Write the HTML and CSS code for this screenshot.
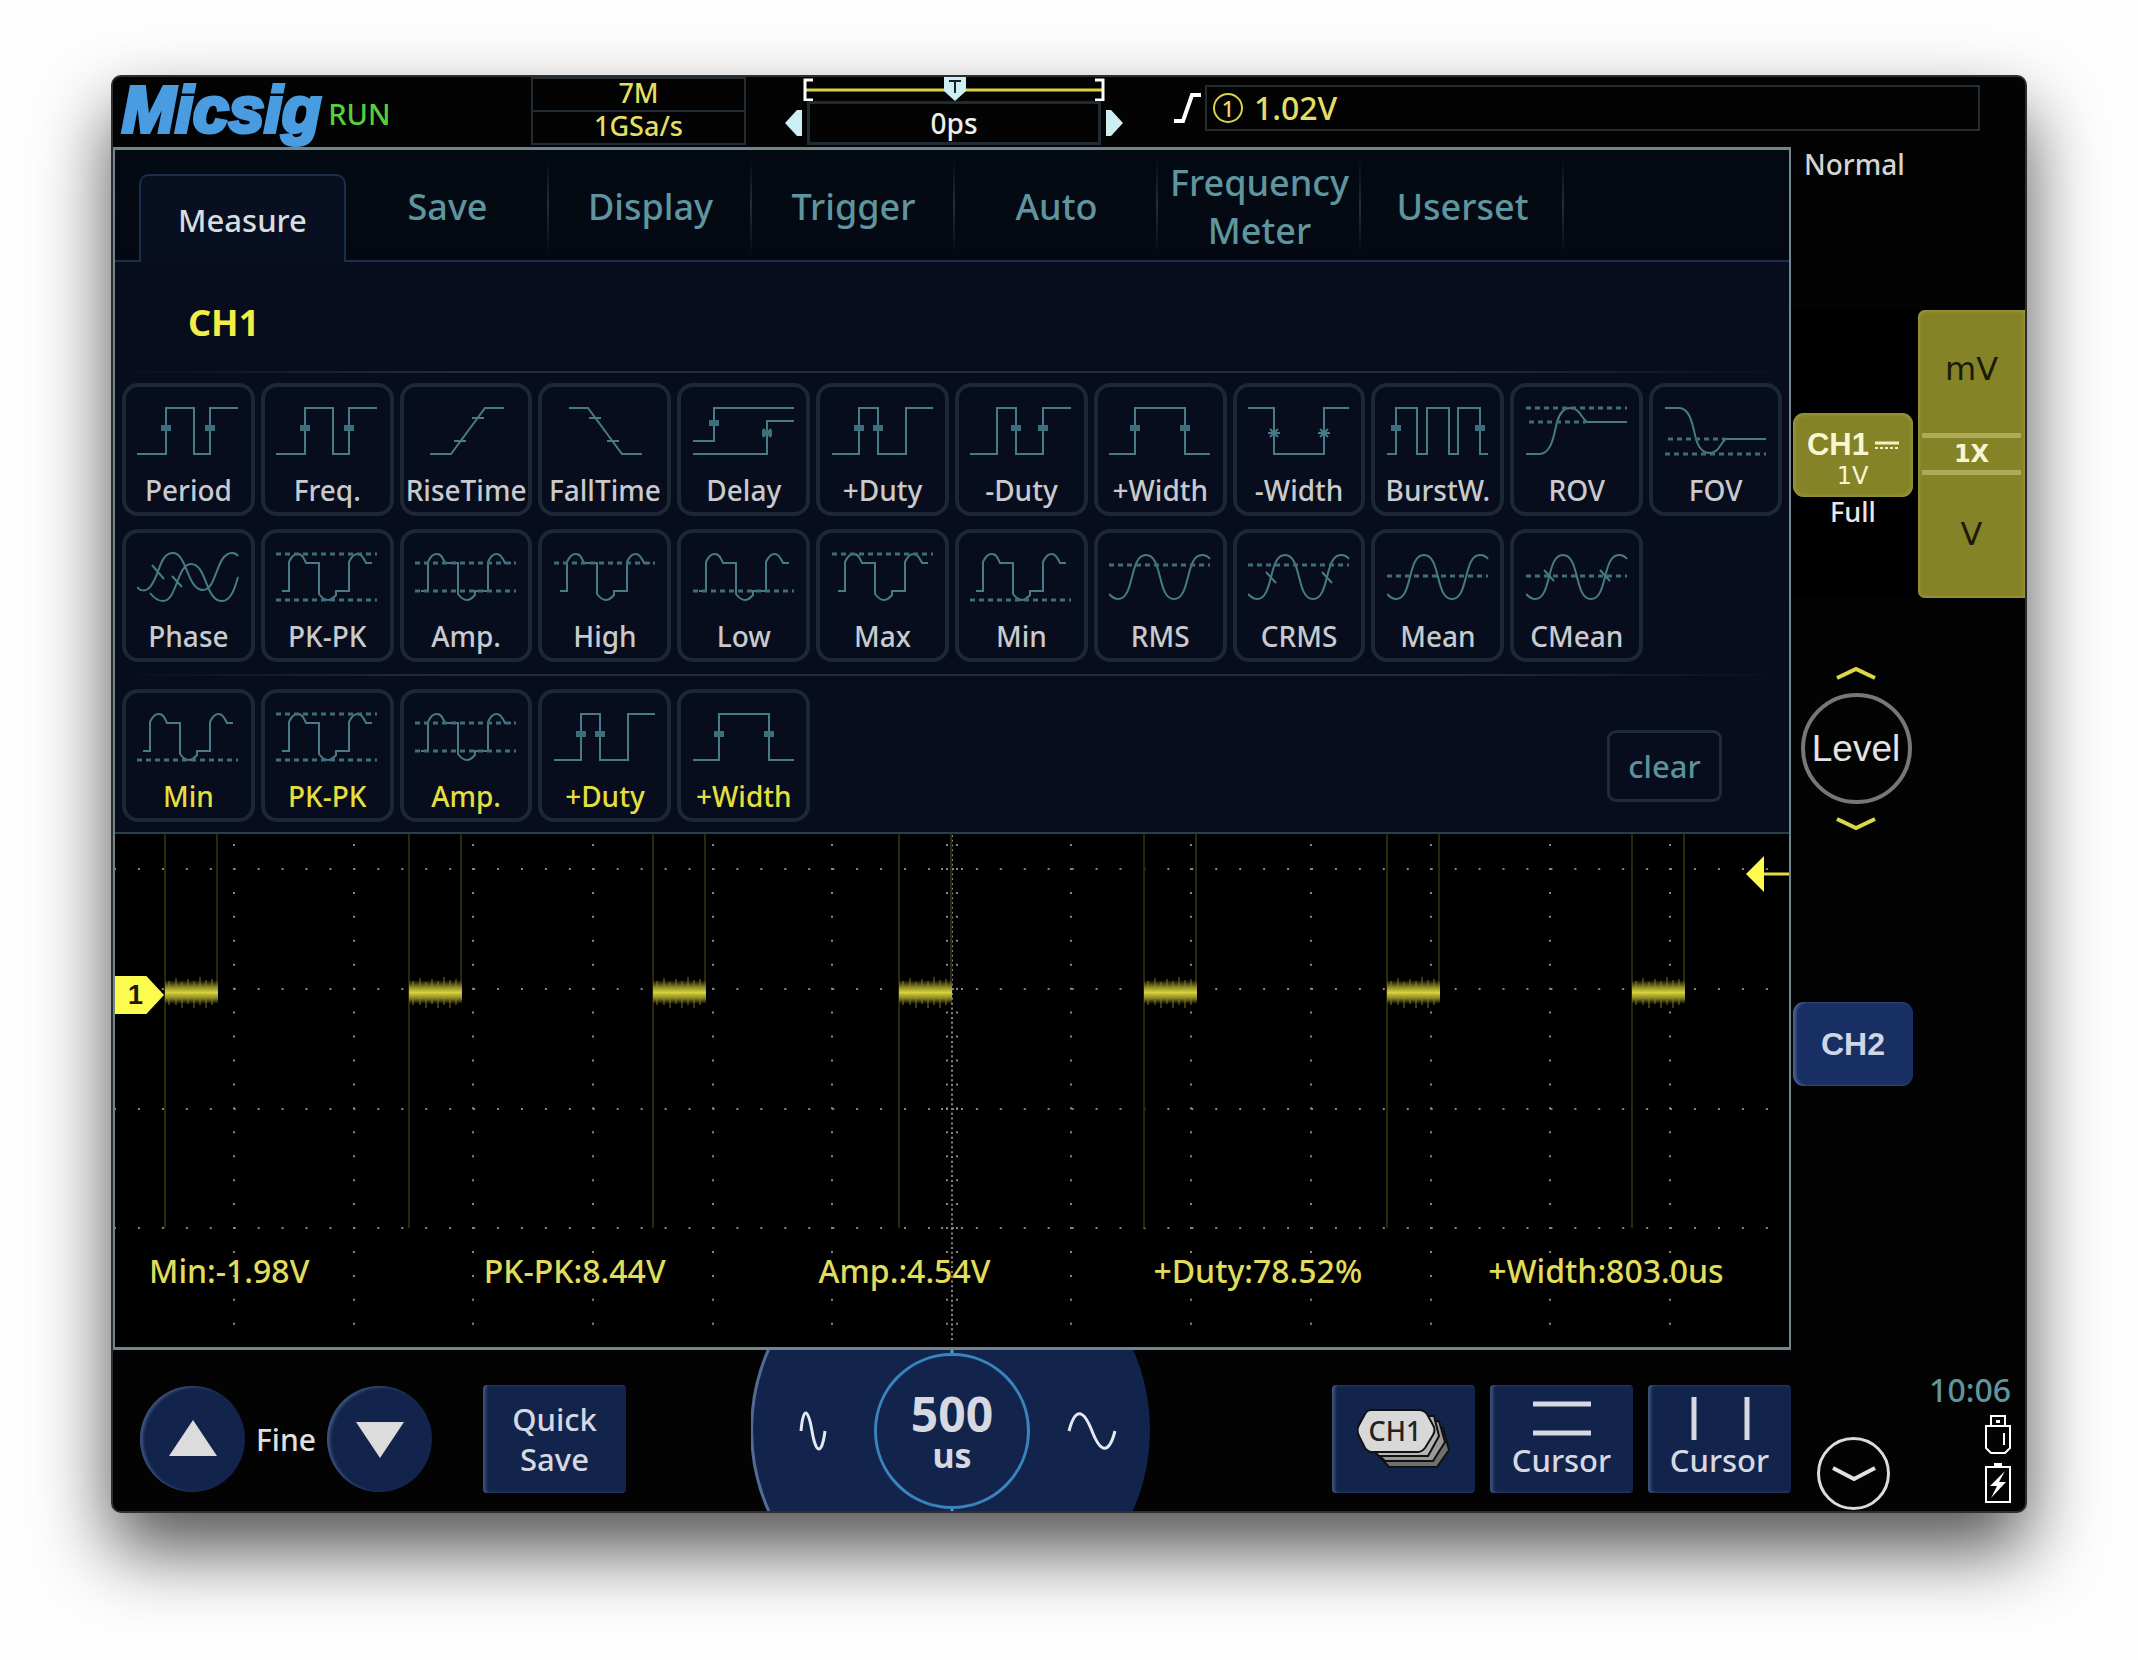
FILE: index.html
```html
<!DOCTYPE html>
<html lang="en">
<head>
<meta charset="utf-8">
<title>Micsig oscilloscope</title>
<link rel="stylesheet" href="styles.css">
</head>
<body>
<svg class="sprite" aria-hidden="true">
  <symbol id="i-period" viewBox="0 0 102 54"><path d="M0 50H29V4H57V50H73V4H101"/><path class="tick" d="M24 24h10M68 24h10"/></symbol>
  <symbol id="i-rise" viewBox="0 0 102 54"><path d="M15 50H36L70 4H89M57 14h12M39 37h12"/></symbol>
  <symbol id="i-fall" viewBox="0 0 102 54"><path d="M15 4H34L68 50H88M35 14h12M53 37h12"/></symbol>
  <symbol id="i-delay" viewBox="0 0 102 54"><path d="M0 37H21V4H101M0 50H74V17H101M70 25l8 8M78 25l-8 8"/><path class="tick" d="M16 19h10M69 29h10"/></symbol>
  <symbol id="i-pduty" viewBox="0 0 102 54"><path d="M0 50H27V4H46V50H74V4H101"/><path class="tick" d="M22 24h10M41 24h10"/></symbol>
  <symbol id="i-nduty" viewBox="0 0 102 54"><path d="M0 50H27V4H46V50H73V4H101"/><path class="tick" d="M41 24h10M68 24h10"/></symbol>
  <symbol id="i-pwidth" viewBox="0 0 102 54"><path d="M0 50H26V4H76V50H101"/><path class="tick" d="M21 24h10M71 24h10"/></symbol>
  <symbol id="i-nwidth" viewBox="0 0 102 54"><path d="M0 4H26V50H76V4H101M22 25l8 8M30 25l-8 8M72 25l8 8M80 25l-8 8M20 29h12M70 29h12"/></symbol>
  <symbol id="i-burst" viewBox="0 0 102 54"><path d="M0 50H9V4H30V50H40V4H62V50H71V4H93V50H101"/><path class="tick" d="M4 24h10M88 24h10"/></symbol>
  <symbol id="i-rov" viewBox="0 0 102 54"><path d="M0 50H13C26 50 28 30 31 18C34 8 38 4 44 4C54 4 55 14 61 18H101"/><path class="dash" d="M0 4H101M3 18H60"/></symbol>
  <symbol id="i-fov" viewBox="0 0 102 54"><path d="M0 4H14C26 4 28 24 31 35C34 45 38 49 45 49C54 49 55 39 61 35H101"/><path class="dash" d="M3 35H60M0 50H101"/></symbol>
  <symbol id="i-phase" viewBox="0 0 102 54"><path d="M0 37C3 41 9 42 13 37C23 26 22 3 36 3C50 3 50 40 66 40C80 40 79 3 95 3Q99 3 101 6M13 43C17 48 21 51 26 51C40 51 40 14 54 14C70 14 68 51 85 51C94 51 98 38 101 27M15 15l12 14M35 26l10 11"/></symbol>
  <symbol id="i-wave" viewBox="0 0 102 54"><path d="M6 41H13V12C16 6 18 4 22 4C27 4 28 9 30 13H43V44C46 48 48 50 52 50C56 50 58 47 60 45V41H73V12C76 6 78 4 82 4C86 4 88 9 90 13H96"/></symbol>
  <symbol id="i-pkpk" viewBox="0 0 102 54"><use href="#i-wave" width="102" height="54"/><path class="dash" d="M0 4H101M0 50H101"/></symbol>
  <symbol id="i-amp" viewBox="0 0 102 54"><use href="#i-wave" width="102" height="54"/><path class="dash" d="M0 13H101M0 41H101"/></symbol>
  <symbol id="i-high" viewBox="0 0 102 54"><use href="#i-wave" width="102" height="54"/><path class="dash" d="M0 13H101"/></symbol>
  <symbol id="i-low" viewBox="0 0 102 54"><use href="#i-wave" width="102" height="54"/><path class="dash" d="M0 41H101"/></symbol>
  <symbol id="i-max" viewBox="0 0 102 54"><use href="#i-wave" width="102" height="54"/><path class="dash" d="M0 4H101"/></symbol>
  <symbol id="i-min" viewBox="0 0 102 54"><use href="#i-wave" width="102" height="54"/><path class="dash" d="M0 50H101"/></symbol>
  <symbol id="i-sine" viewBox="0 0 102 54"><path d="M0 44C3 47 6 49 9 49C26 49 20 5 37 5C54 5 48 49 65 49C82 49 76 5 93 5Q98 5 101 9"/></symbol>
  <symbol id="i-rms" viewBox="0 0 102 54"><use href="#i-sine" width="102" height="54"/><path class="dash" d="M0 15H101"/></symbol>
  <symbol id="i-crms" viewBox="0 0 102 54"><use href="#i-sine" width="102" height="54"/><path class="dash" d="M0 15H101"/><path d="M18 22l10 11M74 22l10 11"/></symbol>
  <symbol id="i-mean" viewBox="0 0 102 54"><use href="#i-sine" width="102" height="54"/><path class="dash" d="M0 26H101"/></symbol>
  <symbol id="i-cmean" viewBox="0 0 102 54"><use href="#i-sine" width="102" height="54"/><path class="dash" d="M0 26H101"/><path d="M18 20l10 11M74 20l10 11"/></symbol>
</svg>

<main class="device">
  <header class="topbar">
    <div class="brand"><span class="logo">Micsig</span><span class="run">RUN</span></div>
    <div class="memory"><span>7M</span><span>1GSa/s</span></div>
    <div class="timebase">
      <svg class="overview" viewBox="0 0 302 24" preserveAspectRatio="none" aria-hidden="true">
        <path d="M2 13H300" stroke="#d9d545" stroke-width="3"/>
        <path d="M10 3H2V23H10M292 3H300V23H292" fill="none" stroke="#fff" stroke-width="3"/>
        <path d="M141 0H163V14L152 24L141 14Z" fill="#cdeef2"/>
        <path d="M146 4H158M152 4V16" stroke="#10242c" stroke-width="2"/>
      </svg>
      <div class="offset">
        <button class="nudge" aria-label="Earlier"><svg width="17" height="28"><path d="M0 14L12 1H17V27H12Z" fill="#cdeef2"/></svg></button>
        <span class="offset-value">0ps</span>
        <button class="nudge" aria-label="Later"><svg width="17" height="28"><path d="M17 14L5 1H0V27H5Z" fill="#cdeef2"/></svg></button>
      </div>
    </div>
    <div class="trigger">
      <svg width="27" height="32" aria-hidden="true"><path d="M0 29H9L18 3H27" fill="none" stroke="#fff" stroke-width="4"/></svg>
      <div class="trigger-value"><span class="source">1</span><span>1.02V</span></div>
    </div>
  </header>

  <section class="screen">
    <nav class="tabs">
      <button class="tab active">Measure</button>
      <button class="tab">Save</button>
      <button class="tab">Display</button>
      <button class="tab">Trigger</button>
      <button class="tab">Auto</button>
      <button class="tab">Frequency Meter</button>
      <button class="tab">Userset</button>
    </nav>
    <div class="menu">
      <h1 class="channel">CH1</h1>
      <div class="tiles">
        <button class="tile"><svg><use href="#i-period"/></svg><span>Period</span></button>
        <button class="tile"><svg><use href="#i-period"/></svg><span>Freq.</span></button>
        <button class="tile"><svg><use href="#i-rise"/></svg><span>RiseTime</span></button>
        <button class="tile"><svg><use href="#i-fall"/></svg><span>FallTime</span></button>
        <button class="tile"><svg><use href="#i-delay"/></svg><span>Delay</span></button>
        <button class="tile"><svg><use href="#i-pduty"/></svg><span>+Duty</span></button>
        <button class="tile"><svg><use href="#i-nduty"/></svg><span>-Duty</span></button>
        <button class="tile"><svg><use href="#i-pwidth"/></svg><span>+Width</span></button>
        <button class="tile"><svg><use href="#i-nwidth"/></svg><span>-Width</span></button>
        <button class="tile"><svg><use href="#i-burst"/></svg><span>BurstW.</span></button>
        <button class="tile"><svg><use href="#i-rov"/></svg><span>ROV</span></button>
        <button class="tile"><svg><use href="#i-fov"/></svg><span>FOV</span></button>
        <button class="tile"><svg><use href="#i-phase"/></svg><span>Phase</span></button>
        <button class="tile"><svg><use href="#i-pkpk"/></svg><span>PK-PK</span></button>
        <button class="tile"><svg><use href="#i-amp"/></svg><span>Amp.</span></button>
        <button class="tile"><svg><use href="#i-high"/></svg><span>High</span></button>
        <button class="tile"><svg><use href="#i-low"/></svg><span>Low</span></button>
        <button class="tile"><svg><use href="#i-max"/></svg><span>Max</span></button>
        <button class="tile"><svg><use href="#i-min"/></svg><span>Min</span></button>
        <button class="tile"><svg><use href="#i-rms"/></svg><span>RMS</span></button>
        <button class="tile"><svg><use href="#i-crms"/></svg><span>CRMS</span></button>
        <button class="tile"><svg><use href="#i-mean"/></svg><span>Mean</span></button>
        <button class="tile"><svg><use href="#i-cmean"/></svg><span>CMean</span></button>
      </div>
      <div class="tiles chosen">
        <button class="tile"><svg><use href="#i-min"/></svg><span>Min</span></button>
        <button class="tile"><svg><use href="#i-pkpk"/></svg><span>PK-PK</span></button>
        <button class="tile"><svg><use href="#i-amp"/></svg><span>Amp.</span></button>
        <button class="tile"><svg><use href="#i-pduty"/></svg><span>+Duty</span></button>
        <button class="tile"><svg><use href="#i-pwidth"/></svg><span>+Width</span></button>
        <button class="clear">clear</button>
      </div>
    </div>
    <div class="scope">
      <svg class="plot" viewBox="1 -1 1674 513" preserveAspectRatio="none" aria-hidden="true">
        <defs>
          <linearGradient id="glow" x1="0" y1="0" x2="0" y2="1">
            <stop offset="0" stop-color="#8a8620" stop-opacity="0"/>
            <stop offset=".3" stop-color="#8f8b26"/>
            <stop offset=".52" stop-color="#d6d13c"/>
            <stop offset=".75" stop-color="#8f8b26"/>
            <stop offset="1" stop-color="#8a8620" stop-opacity="0"/>
          </linearGradient>
          <g id="pulse">
            <path d="M0 -1V393M52 -1V155" stroke="#29280a" stroke-width="2"/>
            <path d="M4 146v24M11 143v27M17 147v26M23 144v25M29 146v27M35 142v28M41 145v28M47 144v26" stroke="#3c3a12" stroke-width="2"/>
            <rect y="145" width="53" height="24" fill="url(#glow)"/>
          </g>
          <path id="col" d="M0 9V500"/>
        </defs>
        <g stroke="#858585" stroke-width="2" stroke-dasharray="2 21.94">
          <path d="M0 34H1655M0 154H1655M0 274H1655M0 393H1655"/>
          <use href="#col" x="120"/><use href="#col" x="240"/><use href="#col" x="359"/><use href="#col" x="479"/><use href="#col" x="599"/><use href="#col" x="718"/>
          <use href="#col" x="833"/><use href="#col" x="843"/>
          <use href="#col" x="957"/><use href="#col" x="1077"/><use href="#col" x="1197"/><use href="#col" x="1317"/><use href="#col" x="1436"/><use href="#col" x="1556"/>
        </g>
        <path d="M838 0V506" stroke="#858585" stroke-width="2" stroke-dasharray="2 2.79"/>
        <path d="M827 34h22M827 154h22M827 274h22M827 393h22" stroke="#858585" stroke-width="2" stroke-dasharray="2 3"/>
        <use href="#pulse" x="51"/><use href="#pulse" x="295"/><use href="#pulse" x="539"/><use href="#pulse" x="785"/><use href="#pulse" x="1030"/><use href="#pulse" x="1273"/><use href="#pulse" x="1518"/>
        <path d="M1632 39L1650 21V57Z" fill="#fdfb4e"/><path d="M1650 39H1675" stroke="#e0dc4a" stroke-width="3"/>
      </svg>
      <span class="marker">1</span>
      <div class="readings">
        <span>Min:-1.98V</span><span>PK-PK:8.44V</span><span>Amp.:4.54V</span><span>+Duty:78.52%</span><span>+Width:803.0us</span>
      </div>
    </div>
  </section>

  <footer class="controls">
    <div class="group">
      <button class="round" aria-label="Fine up"><svg width="50" height="38"><path d="M25 0L49 36H1Z" fill="#dcdcdc"/></svg></button>
      <span class="fine">Fine</span>
      <button class="round" aria-label="Fine down"><svg width="50" height="38"><path d="M25 38L49 2H1Z" fill="#dcdcdc"/></svg></button>
      <button class="key quick">Quick<br>Save</button>
    </div>
    <div class="dial">
      <svg class="dial-face" viewBox="0 0 402 161" aria-hidden="true">
        <circle cx="200" cy="80" r="199" fill="#12244b"/>
        <path d="M20 -6A200 200 0 0 0 20 166" fill="none" stroke="#536a92" stroke-width="3"/>
        <path d="M201 0V4M201 156V161" stroke="#4b9fd9" stroke-width="3"/>
      </svg>
      <button class="dial-step" aria-label="Shorter time base"><svg width="28" height="40"><path d="M2 20C4 -4 9 -4 13 20S23 44 26 20" fill="none" stroke="#e4e8f2" stroke-width="3"/></svg></button>
      <button class="time"><b>500</b><b class="unit">us</b></button>
      <button class="dial-step" aria-label="Longer time base"><svg width="50" height="42"><path d="M2 21C8 -2 16 -2 25 21S42 44 48 21" fill="none" stroke="#e4e8f2" stroke-width="3"/></svg></button>
    </div>
    <div class="group end">
      <button class="key" aria-label="Channel stack CH1">
        <svg width="94" height="62" aria-hidden="true">
          <g stroke="#111" stroke-width="2">
            <path d="M30 20H72L86 20L92 42L80 59H32L20 46Z" fill="#6f6f6f"/>
            <path d="M24 14H66L82 13L88 34L76 53H28L14 40Z" fill="#999"/>
            <path d="M18 8H64L77 8L82 28L71 48H22L8 34Z" fill="#b5b5b5"/>
            <path d="M14 2H62Q67 2 70 6L76 17Q79 22 76 27L68 40Q65 44 60 44H16Q11 44 8 40L2 28Q-1 22 2 17L8 6Q10 2 14 2Z" fill="#d8d8d8"/>
          </g>
          <text class="stack-text" x="38" y="33" text-anchor="middle">CH1</text>
        </svg>
      </button>
      <button class="key cursor"><svg width="60" height="44"><path d="M1 7H59M1 36H59" stroke="#d6d8e2" stroke-width="5"/></svg><span>Cursor</span></button>
      <button class="key cursor"><svg width="60" height="44"><path d="M4 0V43M57 0V43" stroke="#d6d8e2" stroke-width="5"/></svg><span>Cursor</span></button>
    </div>
  </footer>

  <aside class="rail">
    <div class="mode">Normal</div>
    <div class="ch-row">
      <div class="ch-main">
        <button class="ch ch1"><span class="ch-name">CH1<svg width="24" height="8" aria-hidden="true"><path d="M0 2H24" stroke="#f4f2c0" stroke-width="3"/><path d="M0 7H24" stroke="#f4f2c0" stroke-width="2" stroke-dasharray="3 2"/></svg></span><span class="ch-scale">1V</span></button>
        <span class="bandwidth">Full</span>
      </div>
      <div class="volts">
        <button class="volt">mV</button>
        <button class="probe">1X</button>
        <button class="volt">V</button>
      </div>
    </div>
    <div class="level">
      <button class="chev" aria-label="Level up"><svg width="40" height="14"><path d="M1 12L20 3L39 12" fill="none" stroke="#dcd84a" stroke-width="4"/></svg></button>
      <button class="knob">Level</button>
      <button class="chev" aria-label="Level down"><svg width="40" height="14"><path d="M1 2L20 11L39 2" fill="none" stroke="#dcd84a" stroke-width="4"/></svg></button>
    </div>
    <button class="ch ch2">CH2</button>
    <div class="system">
      <button class="more" aria-label="More channels"><svg width="46" height="18"><path d="M2 3L23 14L44 3" fill="none" stroke="#e2e2e2" stroke-width="4"/></svg></button>
      <div class="status">
        <time>10:06</time>
        <svg width="26" height="40" aria-hidden="true"><path d="M6 11V1H20V11M1 11H25V33L20 38H6L1 33ZM19 18V30" fill="none" stroke="#fff" stroke-width="2"/><path d="M11 5h4v3h-4z" fill="#fff"/></svg>
        <svg width="26" height="40" aria-hidden="true"><path d="M1 4H25V39H1Z" fill="none" stroke="#fff" stroke-width="2"/><path d="M9 0H17V4H9Z" fill="#fff"/><path d="M20 8L5 23H12L6 35L21 19H14Z" fill="#fff"/></svg>
      </div>
    </div>
  </aside>
</main>
</body>
</html>
```
FILE: styles.css
```css
* { box-sizing: border-box; }
body {
  margin: 0;
  padding: 75px 111px 147px 111px;
  background: #fefefe;
  font-family: "Noto Sans", "Open Sans", sans-serif;
  font-weight: 500;
}
button {
  margin: 0;
  padding: 0;
  border: 0;
  background: none;
  color: inherit;
  font: inherit;
}
svg { display: block; flex: none; }
.sprite { position: absolute; width: 0; height: 0; }
.sprite path { fill: none; stroke: #487b87; stroke-width: 2; }
.sprite .tick { stroke-width: 6; stroke: #3c6f7c; }
.sprite .dash { stroke-dasharray: 5 4; stroke-width: 3; stroke: #3e6e7b; }

.device {
  display: grid;
  grid-template-columns: minmax(0, 1fr) 234px;
  grid-template-rows: 70px auto 161px;
  border: 2px solid #2e2e2e;
  border-radius: 10px;
  overflow: hidden;
  background: #030303;
  box-shadow: 0 37px 75px rgba(0, 0, 0, .68);
}

/* Top bar */
.topbar {
  grid-column: 1 / 3;
  display: grid;
  grid-template-columns: 418fr 215fr 39fr 338fr 51fr 806fr 45fr;
  color: #e3df62;
}
.brand { display: flex; align-items: center; gap: 7px; padding-left: 9px; }
.logo {
  font: italic bold 64px/66px "Liberation Sans", sans-serif;
  padding-bottom: 6px;
  color: #4a9ce0;
  -webkit-text-stroke: 4px #4a9ce0;
}
.run { font-size: 29px; color: #55d03c; }
.memory {
  display: flex;
  flex-direction: column;
  height: 68px;
  border: 2px solid #222c34;
  font-size: 27px;
  line-height: 28px;
  text-align: center;
}
.memory span { flex: 1; }
.memory span + span { border-top: 2px solid #222c34; }
.timebase { grid-column: 4; }
.overview { width: 302px; height: 24px; margin: 0 auto; }
.offset { display: flex; align-items: center; justify-content: space-between; }
.offset-value {
  flex: 1;
  margin: 0 5px;
  border: 3px solid #1f2a33;
  color: #eee;
  font-size: 28px;
  line-height: 38px;
  text-align: center;
}
.trigger { grid-column: 6; display: flex; align-items: flex-start; gap: 4px; padding-top: 8px; }
.trigger svg { margin-top: 7px; }
.trigger-value {
  flex: 1;
  display: flex;
  align-items: center;
  gap: 11px;
  padding-left: 6px;
  border: 2px solid #222c34;
  font-size: 32px;
  line-height: 42px;
}
.source {
  width: 30px;
  height: 30px;
  border: 2px solid #d9d545;
  border-radius: 50%;
  font-size: 22px;
  line-height: 26px;
  text-align: center;
}

/* Screen */
.screen { border: solid #6f878c; border-width: 3px 2px; background: #000; }
.tabs {
  display: flex;
  align-items: flex-end;
  padding-left: 24px;
  height: 112px;
  background: linear-gradient(#030a12, #050812);
  box-shadow: inset 0 -2px #1b2c50;
  color: #5e959e;
}
.tab {
  width: 203px;
  height: 112px;
  padding-top: 2px;
  font-size: 36px;
  line-height: 48px;
  background: linear-gradient(transparent, #22303a, transparent) right 0 top 8px / 2px 96px no-repeat;
}
.tab.active {
  width: 207px;
  height: 88px;
  border: 2px solid #1b2c50;
  border-bottom: 0;
  border-radius: 10px 10px 0 0;
  background: #080f20;
  color: #d6dde0;
  font-size: 31px;
}
.menu { background: #070d1c; border-bottom: 2px solid #2a4048; }
.channel {
  margin: 0;
  padding: 36px 73px 24px;
  font-size: 36px;
  line-height: 49px;
  color: #f2ee45;
}
.tiles {
  display: grid;
  grid-template-columns: repeat(12, minmax(0, 1fr));
  gap: 13px 6px;
  padding: 12px 7px;
  background: linear-gradient(90deg, transparent, #222e36 20%, #222e36 80%, transparent) top / 100% 2px no-repeat;
}
.tile {
  display: flex;
  flex-direction: column;
  align-items: center;
  gap: 14px;
  height: 133px;
  padding-top: 17px;
  border: 4px solid #1c2833;
  border-radius: 16px;
  color: #c9cacd;
  font-size: 28px;
  line-height: 36px;
  white-space: nowrap;
}
.tile svg { width: 102px; height: 54px; }
.chosen { padding-top: 15px; padding-bottom: 10px; }
.chosen .tile { color: #e3df3f; }
.clear {
  grid-column: 11 / 13;
  justify-self: end;
  align-self: center;
  width: 115px;
  height: 72px;
  margin-right: 60px;
  margin-top: 20px;
  border: 3px solid #1f2b36;
  border-radius: 9px;
  color: #5b929d;
  font-size: 31px;
}
.scope { position: relative; height: 513px; }
.plot { width: 100%; height: 100%; }
.marker {
  position: absolute;
  left: 0;
  top: 142px;
  width: 49px;
  height: 38px;
  padding-left: 13px;
  background: #fdfb4e;
  clip-path: polygon(0 0, 64% 0, 100% 50%, 64% 100%, 0 100%);
  color: #1a1a05;
  font: bold 27px/38px "Liberation Sans", sans-serif;
}
.readings {
  position: absolute;
  inset: auto 0 54px 0;
  display: grid;
  grid-template-columns: repeat(5, 1fr);
  color: #e0dc5c;
  font-size: 32px;
  line-height: 44px;
}
.readings span { padding-left: 34px; white-space: nowrap; }

/* Bottom controls */
.controls { display: grid; grid-template-columns: 1fr 402px 1fr; color: #d6d8e2; font-size: 31px; }
.group { display: flex; align-items: center; padding: 17px 0 0 27px; }
.end { justify-content: flex-end; gap: 15px; }
.round {
  display: grid;
  place-items: center;
  width: 105px;
  height: 106px;
  border-radius: 50%;
  background: #12244b;
  box-shadow: inset 3px 1px 3px #3d5379;
}
.fine { width: 82px; text-align: center; color: #e0e0e0; font-size: 30px; }
.key {
  display: flex;
  flex-direction: column;
  align-items: center;
  justify-content: center;
  width: 143px;
  height: 108px;
  border-radius: 4px;
  background: #12244b;
  box-shadow: inset 3px 0 3px #3d5379;
  line-height: 40px;
}
.quick { display: block; margin-left: 51px; }
.cursor { justify-content: flex-start; padding-top: 12px; line-height: 38px; }
.stack-text { font-size: 27px; fill: #222; }
.dial {
  position: relative;
  display: flex;
  align-items: center;
  justify-content: space-between;
  overflow: hidden;
}
.dial-face { position: absolute; inset: 0; width: 100%; height: 100%; }
.dial-step { position: relative; flex: 1; display: grid; place-items: center; height: 161px; }
.time {
  position: relative;
  display: flex;
  flex-direction: column;
  align-items: center;
  justify-content: center;
  width: 156px;
  height: 156px;
  border: 3px solid #3b83bd;
  border-radius: 50%;
  color: #d6d8e2;
  font-size: 48px;
  line-height: 48px;
}
.unit { font-size: 34px; line-height: 34px; }

/* Right rail */
.rail { grid-column: 2; grid-row: 2 / 4; display: flex; flex-direction: column; color: #d4d4d4; }
.mode { height: 163px; padding-left: 13px; font-size: 28px; line-height: 34px; }
.ch-row { display: flex; justify-content: space-between; height: 288px; background: #000; }
.ch-main { display: flex; flex-direction: column; align-items: center; padding: 103px 0 0 2px; }
.ch {
  display: flex;
  flex-direction: column;
  align-items: center;
  justify-content: center;
  width: 120px;
  height: 84px;
  border-radius: 11px;
  font-family: "Liberation Sans", sans-serif;
  font-weight: bold;
  font-size: 32px;
}
.ch1 { padding-top: 8px; background: #858328; box-shadow: inset 0 0 5px #a9a64c; color: #f8f6d0; font-size: 31px; }
.ch-name { display: flex; align-items: center; gap: 6px; line-height: 34px; }
.ch-scale { padding-right: 1px; font: 24px/28px "DejaVu Sans", sans-serif; }
.bandwidth { color: #e8e8e8; font-size: 27px; line-height: 30px; }
.volts {
  display: flex;
  flex-direction: column;
  width: 107px;
  border-radius: 7px 0 0 7px;
  background: #858328;
  box-shadow: inset 0 0 4px #a9a64c;
  color: #1b1b08;
}
.volt { flex: 1; padding-bottom: 6px; font: 32px/40px "DejaVu Sans", sans-serif; }
.probe {
  margin: 0 4px;
  height: 42px;
  border: solid #aeab58;
  border-width: 5px 0;
  color: #f8f6d0;
  font: bold 24px/30px "DejaVu Sans", sans-serif;
}
.level { display: flex; flex-direction: column; align-items: center; gap: 13px; width: 130px; margin-top: 68px; }
.knob {
  width: 111px;
  height: 111px;
  border: 4px solid #777;
  border-radius: 50%;
  color: #e4e4e4;
  font: 37px/40px "Liberation Sans", sans-serif;
}
.ch2 { margin: 171px 0 0 2px; background: #172f62; box-shadow: inset 3px 0 3px #4a6290; color: #cfd6e6; }
.system { display: flex; justify-content: space-between; align-items: flex-end; margin-top: auto; padding: 0 14px 0 26px; }
.more {
  display: grid;
  place-items: center;
  width: 73px;
  height: 73px;
  margin-bottom: 1px;
  border: 3px solid #dcdcdc;
  border-radius: 50%;
}
.status { display: flex; flex-direction: column; align-items: flex-end; gap: 8px; padding-bottom: 8px; }
.status time { color: #5e959e; font-size: 32px; line-height: 34px; }
```
